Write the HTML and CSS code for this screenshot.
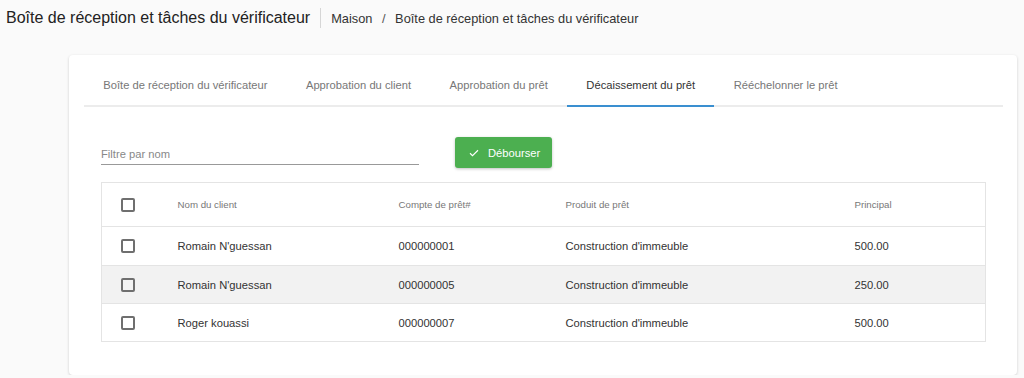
FILE: index.html
```html
<!DOCTYPE html>
<html lang="fr">
<head>
    <meta charset="UTF-8">
    <title>Boîte de réception et tâches du vérificateur</title>
    <link rel="stylesheet" href="styles.css">
</head>
<body>

    <div class="page-header">
        <h1>Boîte de réception et tâches du vérificateur</h1>
        <div class="breadcrumb">Maison <span class="sep">/</span> Boîte de réception et tâches du vérificateur</div>
    </div>

    <div class="card">
        <div class="tabs">
            <div class="tab">Boîte de réception du vérificateur</div>
            <div class="tab">Approbation du client</div>
            <div class="tab">Approbation du prêt</div>
            <div class="tab active">Décaissement du prêt</div>
            <div class="tab">Rééchelonner le prêt</div>
        </div>

        <div class="toolbar">
            <div class="filter">
                <input type="text" placeholder="Filtre par nom">
            </div>
            <button class="btn-green">
                <svg width="12" height="12" viewBox="0 0 24 24"><path d="M4 12.5l5 5L20 6.5" fill="none" stroke="#fff" stroke-width="2.2"/></svg>
                Débourser
            </button>
        </div>

        <table class="grid">
            <thead>
                <tr>
                    <th class="col-check"><span class="checkbox"></span></th>
                    <th class="col-name">Nom du client</th>
                    <th class="col-account">Compte de prêt#</th>
                    <th class="col-product">Produit de prêt</th>
                    <th>Principal</th>
                </tr>
            </thead>
            <tbody>
                <tr class="first">
                    <td class="col-check"><span class="checkbox"></span></td>
                    <td>Romain N'guessan</td>
                    <td>000000001</td>
                    <td>Construction d'immeuble</td>
                    <td>500.00</td>
                </tr>
                <tr class="hover">
                    <td class="col-check"><span class="checkbox"></span></td>
                    <td>Romain N'guessan</td>
                    <td>000000005</td>
                    <td>Construction d'immeuble</td>
                    <td>250.00</td>
                </tr>
                <tr>
                    <td class="col-check"><span class="checkbox"></span></td>
                    <td>Roger kouassi</td>
                    <td>000000007</td>
                    <td>Construction d'immeuble</td>
                    <td>500.00</td>
                </tr>
            </tbody>
        </table>
    </div>

</body>
</html>
```

FILE: styles.css
```css
body {
    font-family: "Liberation Sans", Arial, sans-serif;
    margin: 0;
    padding: 0;
    background-color: #fafafa;
    color: #333;
}

.page-header {
    display: flex;
    align-items: center;
    height: 36px;
    padding-left: 6px;
}

    .page-header h1 {
        font-size: 16px;
        font-weight: normal;
        color: #222;
        margin: 0;
        padding-right: 10px;
        border-right: 1px solid #d6d6d6;
        line-height: 20px;
    }

.breadcrumb {
    font-size: 12.8px;
    color: #333;
    padding-left: 10px;
}

    .breadcrumb .sep {
        margin: 0 6px;
        color: #555;
    }

.card {
    background-color: #fff;
    margin: 19px 7px 0 69px;
    padding: 10px 14px 33px 15px;
    border-radius: 4px;
    box-shadow: 0 1px 3px rgba(0, 0, 0, 0.18);
}

.tabs {
    display: flex;
    border-bottom: 2px solid #ececec;
}

.tab {
    font-size: 11.2px;
    color: #777;
    padding: 0 19.25px;
    height: 40px;
    line-height: 40px;
    margin-bottom: -2px;
    border-bottom: 2px solid transparent;
}

    .tab.active {
        color: #333;
        border-bottom-color: #3a8fd0;
    }

.toolbar {
    display: flex;
    align-items: flex-start;
    padding: 30px 17px 0 17px;
    height: 45px;
}

.filter {
    width: 318px;
    margin-right: 36px;
}

    .filter input {
        display: block;
        width: 100%;
        box-sizing: border-box;
        border: none;
        border-bottom: 1px solid #999;
        font-family: inherit;
        font-size: 11.2px;
        padding: 11px 0 4px 0;
        margin: 0;
        outline: none;
        background: transparent;
    }

        .filter input::placeholder {
            color: #888;
        }

.btn-green {
    display: flex;
    align-items: center;
    gap: 8px;
    height: 31px;
    padding: 0 12px 0 13px;
    background-color: #4caf50;
    color: #fff;
    border: none;
    border-radius: 3px;
    font-family: inherit;
    font-size: 11.2px;
    box-shadow: 0 1px 3px rgba(0, 0, 0, 0.25);
}

.grid {
    margin: 0 17px;
    width: calc(100% - 34px);
    table-layout: fixed;
    border-collapse: collapse;
    border: 1px solid #e4e4e4;
    font-size: 11.2px;
}

    .grid th, .grid td {
        padding: 0;
        box-sizing: border-box;
    }

    .grid th {
        font-weight: normal;
        font-size: 9.7px;
        color: #777;
        text-align: left;
        height: 44px;
        border-bottom: 1px solid #e4e4e4;
    }

    .grid td {
        height: 38px;
        border-bottom: 1px solid #e4e4e4;
        color: #333;
    }

    .grid tr.first td {
        height: 39px;
    }

    .grid tr.hover td {
        background-color: #f2f2f2;
    }

.grid .col-check {
    width: 76px;
    padding-left: 19px;
}

.col-name {
    width: 221px;
}

.col-account {
    width: 167px;
}

.col-product {
    width: 289px;
}

.checkbox {
    display: block;
    width: 10px;
    height: 10px;
    border: 2px solid #6f6f6f;
    border-radius: 2px;
}
```
